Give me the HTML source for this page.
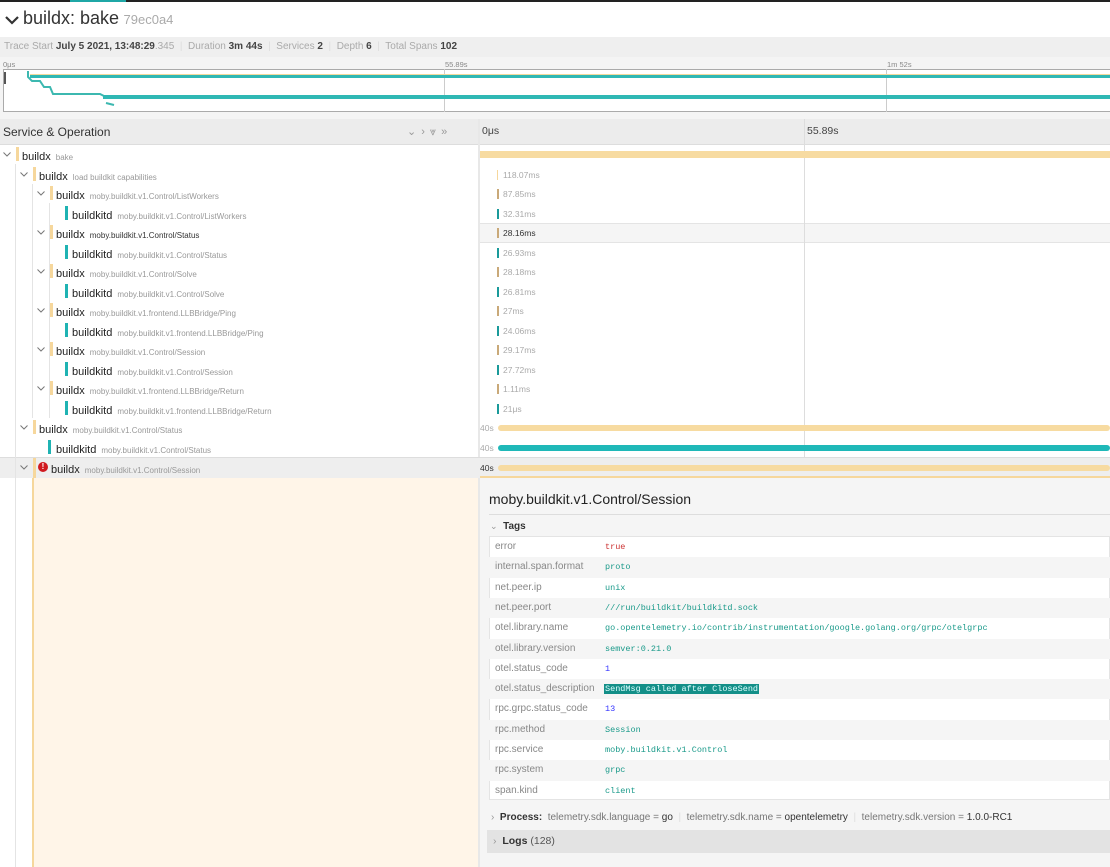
<!DOCTYPE html>
<html><head><meta charset="utf-8"><style>
*{box-sizing:border-box;margin:0;padding:0}
body{width:1110px;height:867px;overflow:hidden;background:#fff;font-family:"Liberation Sans",sans-serif;color:#333;position:relative}
.a{position:absolute}
.row{position:absolute;left:0;width:1110px;height:19.5px}
.svc{font-size:11px;color:#222}
.op{font-size:8px;color:#999;margin-left:5px}
.chev{position:absolute;top:7px;width:8px;height:5px}
.bar{position:absolute;width:3px;height:14px;top:2px}
.lbl{position:absolute;font-size:8.5px;color:#aaa;top:5px}
.tk{position:absolute;width:2px;height:10px;top:5px}
.tr{position:absolute;left:489px;width:621px;height:20.3px;font-size:10px}
.tr .k{position:absolute;left:6px;top:4px;color:#888}
.tr .v{position:absolute;left:116px;top:5px;font-family:"Liberation Mono",monospace;font-size:8.5px;color:#1a9a8a}
</style></head><body>
<svg width="0" height="0" style="position:absolute"><defs><symbol id="cv" viewBox="0 0 8 5"><path d="M0.5 0.5 L4 4 L7.5 0.5" stroke="#777" stroke-width="1" fill="none"/></symbol></defs></svg>
<div class="a" style="left:0;top:0;width:1110px;height:2px;background:#222"></div>
<div class="a" style="left:70px;top:0;width:56px;height:2px;background:#1fa7a6"></div>
<div class="a" style="left:5px;top:8px;font-size:16px;color:#333;white-space:nowrap">
<svg width="14" height="10" style="vertical-align:middle;margin-right:4px"><path d="M1 2 L7 8 L13 2" stroke="#333" stroke-width="2.2" fill="none"/></svg><span style="font-size:18px">buildx: bake</span> <span style="font-size:13px;color:#aaa">79ec0a4</span></div>
<div class="a" style="left:0;top:37px;width:1110px;height:20px;background:#efefef;font-size:10px;color:#aaa;padding:4px 4px;white-space:nowrap">Trace Start <b style="color:#444">July 5 2021, 13:48:29</b>.345 &nbsp;<span style="color:#ddd">|</span>&nbsp; Duration <b style="color:#444">3m 44s</b> &nbsp;<span style="color:#ddd">|</span>&nbsp; Services <b style="color:#444">2</b> &nbsp;<span style="color:#ddd">|</span>&nbsp; Depth <b style="color:#444">6</b> &nbsp;<span style="color:#ddd">|</span>&nbsp; Total Spans <b style="color:#444">102</b></div>
<div class="a" style="left:0;top:57px;width:1110px;height:62px;background:#f4f4f4"></div>
<div class="a" style="left:3px;top:60px;font-size:7.5px;color:#888">0μs</div>
<div class="a" style="left:445px;top:60px;font-size:7.5px;color:#888">55.89s</div>
<div class="a" style="left:887px;top:60px;font-size:7.5px;color:#888">1m 52s</div>
<div class="a" style="left:3px;top:69px;width:1107px;height:43px;background:#fff;border:1px solid #aaa;border-right:none"></div>
<div class="a" style="left:444px;top:69px;width:1px;height:43px;background:#ccc"></div>
<div class="a" style="left:886px;top:69px;width:1px;height:43px;background:#ccc"></div>
<div class="a" style="left:4px;top:72px;width:2px;height:12px;background:#555"></div>
<svg class="a" style="left:0;top:69px" width="1110" height="43"><path d="M28 2 V8 L32 12 H40 L44 18 H50 L53 25 H100 L104 27 H110 M106 34 L114 36" stroke="#3cb8b0" stroke-width="2" fill="none"/><rect x="30" y="6" width="1080" height="3" fill="#2fb8b4"/><rect x="30" y="5" width="1080" height="1" fill="#f3d99c"/><rect x="103" y="26" width="1007" height="4" fill="#2fb8b4"/></svg>
<div class="a" style="left:0;top:119px;width:1110px;height:26px;background:#ececec;border-bottom:1px solid #ddd"></div>
<div class="a" style="left:3px;top:125px;font-size:12px;color:#333">Service &amp; Operation</div>
<div class="a" style="left:407px;top:125px;font-size:11px;color:#999;letter-spacing:5px">⌄›⩔»</div>
<div class="a" style="left:478px;top:119px;width:2px;height:748px;background:#e8e8e8"></div>
<div class="a" style="left:482px;top:125px;font-size:10.5px;color:#444">0μs</div>
<div class="a" style="left:807px;top:125px;font-size:10.5px;color:#444">55.89s</div>
<div class="a" style="left:480px;top:223px;width:630px;height:20px;background:#f5f5f5;border-top:1px solid #e4e4e4;border-bottom:1px solid #e4e4e4"></div>
<div class="a" style="left:804px;top:119px;width:1px;height:359px;background:#ddd"></div>

<!-- rows -->
<div class="row" style="top:145px"><svg class="chev" style="left:3px"><use href="#cv"/></svg><div class="bar" style="left:16px;background:#f6d79c"></div><div class="a" style="left:22px;top:2px"><span class="svc">buildx</span><span class="op">bake</span></div><div class="a" style="left:480px;top:6px;width:630px;height:7px;background:#f7dba1"></div></div>
<div class="row" style="top:164.5px"><svg class="chev" style="left:20px"><use href="#cv"/></svg><div class="bar" style="left:33px;background:#f6d79c"></div><div class="a" style="left:39px;top:2px"><span class="svc">buildx</span><span class="op">load buildkit capabilities</span></div><div class="tk" style="left:497px;width:1px;background:#f6d79c"></div><span class="lbl" style="left:503px">118.07ms</span></div>
<div class="row" style="top:184px"><svg class="chev" style="left:37px"><use href="#cv"/></svg><div class="bar" style="left:50px;background:#f6d79c"></div><div class="a" style="left:56px;top:2px"><span class="svc">buildx</span><span class="op">moby.buildkit.v1.Control/ListWorkers</span></div><div class="tk" style="left:497px;background:#c9a979"></div><span class="lbl" style="left:503px">87.85ms</span></div>
<div class="row" style="top:203.5px"><div class="bar" style="left:65px;background:#1fb3b3"></div><div class="a" style="left:72px;top:2px"><span class="svc">buildkitd</span><span class="op">moby.buildkit.v1.Control/ListWorkers</span></div><div class="tk" style="left:497px;background:#1a9a9a"></div><span class="lbl" style="left:503px">32.31ms</span></div>
<div class="row" style="top:223px"><svg class="chev" style="left:37px"><use href="#cv"/></svg><div class="bar" style="left:50px;background:#f6d79c"></div><div class="a" style="left:56px;top:2px"><span class="svc">buildx</span><span class="op" style="color:#333">moby.buildkit.v1.Control/Status</span></div><div class="tk" style="left:497px;background:#c9a979"></div><span class="lbl" style="left:503px;color:#333">28.16ms</span></div>
<div class="row" style="top:242.5px"><div class="bar" style="left:65px;background:#1fb3b3"></div><div class="a" style="left:72px;top:2px"><span class="svc">buildkitd</span><span class="op">moby.buildkit.v1.Control/Status</span></div><div class="tk" style="left:497px;background:#1a9a9a"></div><span class="lbl" style="left:503px">26.93ms</span></div>
<div class="row" style="top:262px"><svg class="chev" style="left:37px"><use href="#cv"/></svg><div class="bar" style="left:50px;background:#f6d79c"></div><div class="a" style="left:56px;top:2px"><span class="svc">buildx</span><span class="op">moby.buildkit.v1.Control/Solve</span></div><div class="tk" style="left:497px;background:#c9a979"></div><span class="lbl" style="left:503px">28.18ms</span></div>
<div class="row" style="top:281.5px"><div class="bar" style="left:65px;background:#1fb3b3"></div><div class="a" style="left:72px;top:2px"><span class="svc">buildkitd</span><span class="op">moby.buildkit.v1.Control/Solve</span></div><div class="tk" style="left:497px;background:#1a9a9a"></div><span class="lbl" style="left:503px">26.81ms</span></div>
<div class="row" style="top:301px"><svg class="chev" style="left:37px"><use href="#cv"/></svg><div class="bar" style="left:50px;background:#f6d79c"></div><div class="a" style="left:56px;top:2px"><span class="svc">buildx</span><span class="op">moby.buildkit.v1.frontend.LLBBridge/Ping</span></div><div class="tk" style="left:497px;background:#c9a979"></div><span class="lbl" style="left:503px">27ms</span></div>
<div class="row" style="top:320.5px"><div class="bar" style="left:65px;background:#1fb3b3"></div><div class="a" style="left:72px;top:2px"><span class="svc">buildkitd</span><span class="op">moby.buildkit.v1.frontend.LLBBridge/Ping</span></div><div class="tk" style="left:497px;background:#1a9a9a"></div><span class="lbl" style="left:503px">24.06ms</span></div>
<div class="row" style="top:340px"><svg class="chev" style="left:37px"><use href="#cv"/></svg><div class="bar" style="left:50px;background:#f6d79c"></div><div class="a" style="left:56px;top:2px"><span class="svc">buildx</span><span class="op">moby.buildkit.v1.Control/Session</span></div><div class="tk" style="left:497px;background:#c9a979"></div><span class="lbl" style="left:503px">29.17ms</span></div>
<div class="row" style="top:359.5px"><div class="bar" style="left:65px;background:#1fb3b3"></div><div class="a" style="left:72px;top:2px"><span class="svc">buildkitd</span><span class="op">moby.buildkit.v1.Control/Session</span></div><div class="tk" style="left:497px;background:#1a9a9a"></div><span class="lbl" style="left:503px">27.72ms</span></div>
<div class="row" style="top:379px"><svg class="chev" style="left:37px"><use href="#cv"/></svg><div class="bar" style="left:50px;background:#f6d79c"></div><div class="a" style="left:56px;top:2px"><span class="svc">buildx</span><span class="op">moby.buildkit.v1.frontend.LLBBridge/Return</span></div><div class="tk" style="left:497px;background:#c9a979"></div><span class="lbl" style="left:503px">1.11ms</span></div>
<div class="row" style="top:398.5px"><div class="bar" style="left:65px;background:#1fb3b3"></div><div class="a" style="left:72px;top:2px"><span class="svc">buildkitd</span><span class="op">moby.buildkit.v1.frontend.LLBBridge/Return</span></div><div class="tk" style="left:497px;background:#1a9a9a"></div><span class="lbl" style="left:503px">21μs</span></div>
<div class="row" style="top:418px"><svg class="chev" style="left:20px"><use href="#cv"/></svg><div class="bar" style="left:33px;background:#f6d79c"></div><div class="a" style="left:39px;top:2px"><span class="svc">buildx</span><span class="op">moby.buildkit.v1.Control/Status</span></div><span class="lbl" style="left:480px">40s</span><div class="a" style="left:498px;top:7px;width:612px;height:6px;border-radius:3px;background:#f7dba1"></div></div>
<div class="row" style="top:437.5px"><div class="bar" style="left:48px;background:#1fb3b3"></div><div class="a" style="left:56px;top:2px"><span class="svc">buildkitd</span><span class="op">moby.buildkit.v1.Control/Status</span></div><span class="lbl" style="left:480px">40s</span><div class="a" style="left:498px;top:7px;width:612px;height:6px;border-radius:3px;background:#1fb8b8"></div></div>
<div class="row" style="top:457px;height:21px;background:#eee;border-top:1px solid #ddd"><svg class="chev" style="left:20px"><use href="#cv"/></svg><div class="bar" style="left:33px;background:#f6d79c;height:21px;top:0"></div><div class="a" style="left:38px;top:4px;width:10px;height:10px;border-radius:50%;background:#d0191f;color:#fff;font-size:8px;font-weight:bold;text-align:center;line-height:10px">!</div><div class="a" style="left:51px;top:2px"><span class="svc">buildx</span><span class="op">moby.buildkit.v1.Control/Session</span></div><span class="lbl" style="left:480px;color:#333">40s</span><div class="a" style="left:498px;top:7px;width:612px;height:6px;border-radius:3px;background:#f7dba1"></div></div>

<!-- tree guide lines -->
<div class="a" style="left:15px;top:164px;width:1px;height:703px;background:#e4e4e4"></div>
<div class="a" style="left:32px;top:184px;width:1px;height:234px;background:#e4e4e4"></div>
<div class="a" style="left:49px;top:203px;width:1px;height:215px;background:#e4e4e4"></div>
<!-- detail area left -->
<div class="a" style="left:32px;top:478px;width:446px;height:389px;background:#fff5e8"></div>
<div class="a" style="left:32px;top:478px;width:2px;height:389px;background:#f6d79c"></div>
<div class="a" style="left:480px;top:476px;width:630px;height:2px;background:#f6d79c"></div>
<div class="a" style="left:480px;top:478px;width:630px;height:389px;background:#f5f5f5"></div>
<div class="a" style="left:489px;top:491px;font-size:14px;color:#222">moby.buildkit.v1.Control/Session</div>
<div class="a" style="left:489px;top:514px;width:621px;height:1px;background:#ddd"></div>
<div class="a" style="left:490px;top:521px;font-size:10px;color:#333"><span style="color:#999;font-size:9px">⌄</span>&nbsp; <b>Tags</b></div>
<div class="a" style="left:489px;top:536px;width:621px;height:264px;background:#fff;border:1px solid #e4e4e4"></div>
<div class="tr" style="top:537px"><span class="k">error</span><span class="v" style="color:#c33">true</span></div>
<div class="tr" style="top:557.3px;background:#f5f5f5"><span class="k">internal.span.format</span><span class="v">proto</span></div>
<div class="tr" style="top:577.6px"><span class="k">net.peer.ip</span><span class="v">unix</span></div>
<div class="tr" style="top:597.9px;background:#f5f5f5"><span class="k">net.peer.port</span><span class="v">///run/buildkit/buildkitd.sock</span></div>
<div class="tr" style="top:618.2px"><span class="k">otel.library.name</span><span class="v">go.opentelemetry.io/contrib/instrumentation/google.golang.org/grpc/otelgrpc</span></div>
<div class="tr" style="top:638.5px;background:#f5f5f5"><span class="k">otel.library.version</span><span class="v">semver:0.21.0</span></div>
<div class="tr" style="top:658.8px"><span class="k">otel.status_code</span><span class="v" style="color:#33f">1</span></div>
<div class="tr" style="top:679.1px;background:#f5f5f5"><span class="k">otel.status_description</span><span class="v" style="background:#138f88;color:#dff;padding:0 1px;left:115px">SendMsg called after CloseSend</span></div>
<div class="tr" style="top:699.4px"><span class="k">rpc.grpc.status_code</span><span class="v" style="color:#33f">13</span></div>
<div class="tr" style="top:719.7px;background:#f5f5f5"><span class="k">rpc.method</span><span class="v">Session</span></div>
<div class="tr" style="top:740px"><span class="k">rpc.service</span><span class="v">moby.buildkit.v1.Control</span></div>
<div class="tr" style="top:760.3px;background:#f5f5f5"><span class="k">rpc.system</span><span class="v">grpc</span></div>
<div class="tr" style="top:780.6px"><span class="k">span.kind</span><span class="v">client</span></div>
<div class="a" style="left:491px;top:812px;font-size:10px;color:#777;white-space:nowrap"><span style="color:#999">›</span>&nbsp; <b style="color:#333">Process:</b>&nbsp; telemetry.sdk.language = <span style="color:#333">go</span> &nbsp;<span style="color:#ddd">|</span>&nbsp; telemetry.sdk.name = <span style="color:#333">opentelemetry</span> &nbsp;<span style="color:#ddd">|</span>&nbsp; telemetry.sdk.version = <span style="color:#333">1.0.0-RC1</span></div>
<div class="a" style="left:487px;top:830px;width:623px;height:23px;background:#e3e3e3;font-size:10.5px;color:#555;padding:5px 6px"><span style="color:#999">›</span>&nbsp; <b style="color:#333">Logs</b> (128)</div>
</body></html>
